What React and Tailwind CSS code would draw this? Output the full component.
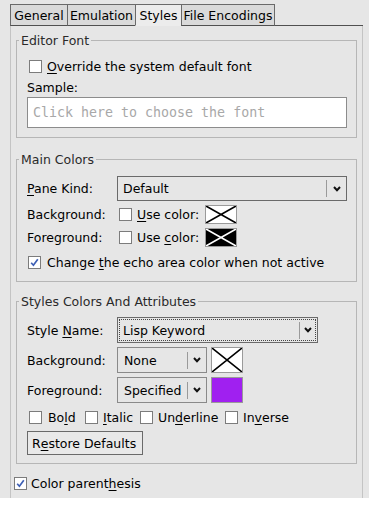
import React from 'react';

const sans = { fontFamily: '"DejaVu Sans", "Liberation Sans", sans-serif' };

function Mn({ children }) {
  return <span className="underline underline-offset-[2px] decoration-[1px]">{children}</span>;
}

function Check({ checked }) {
  return (
    <div className="w-[13px] h-[13px] shrink-0 bg-white border border-[#7c7c7c] flex items-center justify-center">
      {checked && (
        <svg width="11" height="11" viewBox="0 0 11 11">
          <path d="M2.2 5.8 L4.4 8.2 L8.8 2.2" fill="none" stroke="#3d5fb5" strokeWidth="1.7" />
        </svg>
      )}
    </div>
  );
}

function Arrow() {
  return (
    <svg width="8" height="6" viewBox="0 0 8 6">
      <path d="M1 1 L4 4.2 L7 1" fill="none" stroke="#111" strokeWidth="2" />
    </svg>
  );
}

function Swatch({ w, h, fill, line }) {
  return (
    <div className={`${w} ${h} border border-[#9a9a9a] shrink-0`} style={{ background: fill }}>
      <svg width="100%" height="100%" preserveAspectRatio="none" viewBox="0 0 30 20" className="block">
        <path d="M0 0 L30 20 M30 0 L0 20" stroke={line} strokeWidth="1.6" vectorEffect="non-scaling-stroke" />
      </svg>
    </div>
  );
}

function Group({ title, className, children }) {
  return (
    <fieldset className={`border border-[#b6b6b6] p-0 m-0 ${className}`}>
      <legend className="ml-[2px] px-[2px] h-[15px] leading-[15px] text-[#2a2a2a]">{title}</legend>
      <div className="pl-[10px] pr-[9px]">{children}</div>
    </fieldset>
  );
}

function Label({ children }) {
  return <div className="w-[90px] shrink-0">{children}</div>;
}

export default function App() {
  const tabs = [
    { name: 'General', w: 'w-[57px]' },
    { name: 'Emulation', w: 'w-[68px]' },
    { name: 'Styles', w: 'w-[46px]', active: true },
    { name: 'File Encodings', w: 'w-[94px]' },
  ];

  return (
    <div className="w-[379px] h-[509px] bg-white text-[12.5px] leading-[15px] text-black" style={sans}>
      <div className="w-[369px] h-[498px] bg-[#e6e6e6] flex flex-col overflow-hidden">
        {/* Tab bar */}
        <div className="mt-[4px] pl-[10px] pr-[6px] flex h-[22px]">
          {tabs.map((t, i) => (
            <div
              key={t.name}
              className={`${t.w} h-full flex items-center justify-center border-t border-l border-[#6a6a6a] ${i === tabs.length - 1 ? 'border-r' : ''} ${t.active ? 'bg-[#ececec] border-b border-b-transparent' : 'bg-[#dadada] border-b border-b-[#505050]'}`}
            >
              {t.name}
            </div>
          ))}
          <div className="flex-1 border-b border-[#505050]" />
        </div>

        {/* Page */}
        <div className="ml-[10px] w-[353px] flex-1 border-l border-r border-[#c4c4c4] px-[5px] pt-[7px]">
          <Group title="Editor Font">
            <div className="mt-[10px] h-[16px] flex items-center">
              <div className="ml-[2px]"><Check /></div>
              <span className="ml-[5px]"><Mn>O</Mn>verride the system default font</span>
            </div>
            <div className="mt-[5px] h-[16px] flex items-center">Sample:</div>
            <div
              className="mt-[2px] h-[31px] bg-white border border-[#8c8c8c] flex items-center pl-[5px] text-[13.3px] text-[#a8a8a8]"
              style={{ fontFamily: '"DejaVu Sans Mono", "Liberation Mono", monospace' }}
            >
              Click here to choose the font
            </div>
            <div className="h-[9px]" />
          </Group>

          <Group title="Main Colors" className="mt-[14px]">
            <div className="mt-[9px] h-[25px] flex items-center">
              <Label><Mn>P</Mn>ane Kind:</Label>
              <div className="w-[230px] h-full border border-[#6a6a6a] flex items-center">
                <div className="flex-1 pl-[5px]">Default</div>
                <div className="w-px h-[17px] bg-[#9a9a9a]" />
                <div className="w-[19px] flex justify-center"><Arrow /></div>
              </div>
            </div>
            <div className="mt-[4px] h-[19px] flex items-center">
              <Label>Background:</Label>
              <div className="ml-[2px]"><Check /></div>
              <span className="ml-[5px] w-[68px]"><Mn>U</Mn>se color:</span>
              <Swatch w="w-[32px]" h="h-[19px]" fill="#ffffff" line="#000" />
            </div>
            <div className="mt-[4px] h-[19px] flex items-center">
              <Label>Foreground:</Label>
              <div className="ml-[2px]"><Check /></div>
              <span className="ml-[5px] w-[68px]">Use <Mn>c</Mn>olor:</span>
              <Swatch w="w-[32px]" h="h-[19px]" fill="#000000" line="#fff" />
            </div>
            <div className="mt-[7px] h-[16px] flex items-center">
              <div className="ml-[1px]"><Check checked /></div>
              <span className="ml-[6px]">Change <Mn>t</Mn>he echo area color when not active</span>
            </div>
            <div className="h-[11px]" />
          </Group>

          <Group title="Styles Colors And Attributes" className="mt-[12px]">
            <div className="mt-[8px] h-[26px] flex items-center">
              <Label>Style <Mn>N</Mn>ame:</Label>
              <div className="w-[201px] h-full border border-[#6a6a6a] p-[1px]">
                <div className="h-full border border-dotted border-[#444] flex items-center">
                  <div className="flex-1 pl-[3px]">Lisp Keyword</div>
                  <div className="w-px h-[17px] bg-[#9a9a9a]" />
                  <div className="w-[15px] flex justify-center"><Arrow /></div>
                </div>
              </div>
            </div>
            <div className="mt-[4px] h-[26px] flex items-center">
              <Label>Background:</Label>
              <div className="w-[90px] h-full border border-[#8a8a8a] flex items-center">
                <div className="flex-1 pl-[6px]">None</div>
                <div className="w-px h-[17px] bg-[#9a9a9a]" />
                <div className="w-[18px] flex justify-center"><Arrow /></div>
              </div>
              <div className="ml-[4px]"><Swatch w="w-[32px]" h="h-[26px]" fill="#ffffff" line="#000" /></div>
            </div>
            <div className="mt-[4px] h-[26px] flex items-center">
              <Label>Foreground:</Label>
              <div className="w-[90px] h-full border border-[#8a8a8a] flex items-center">
                <div className="flex-1 pl-[6px]">Specified</div>
                <div className="w-px h-[17px] bg-[#9a9a9a]" />
                <div className="w-[18px] flex justify-center"><Arrow /></div>
              </div>
              <div className="ml-[4px] w-[32px] h-[26px] border border-[#9a9a9a] bg-[#a020f0]" />
            </div>
            <div className="mt-[6px] h-[16px] flex items-center">
              <div className="ml-[2px]"><Check /></div>
              <span className="ml-[6px] w-[37px]">Bo<Mn>l</Mn>d</span>
              <Check />
              <span className="ml-[5px] w-[37px]"><Mn>I</Mn>talic</span>
              <Check />
              <span className="ml-[5px] w-[67px]">Un<Mn>d</Mn>erline</span>
              <Check />
              <span className="ml-[5px]">In<Mn>v</Mn>erse</span>
            </div>
            <div className="mt-[6px] h-[24px] w-[116px] border border-[#6a6a6a] bg-[#e9e9e9] flex items-center pl-[4px]">
              R<Mn>e</Mn>store Defaults
            </div>
            <div className="h-[8px]" />
          </Group>

          <div className="mt-[11px] h-[16px] flex items-center">
            <div className="-ml-[2px]"><Check checked /></div>
            <span className="ml-[4px]">Color parent<Mn>h</Mn>esis</span>
          </div>
        </div>
      </div>
    </div>
  );
}
